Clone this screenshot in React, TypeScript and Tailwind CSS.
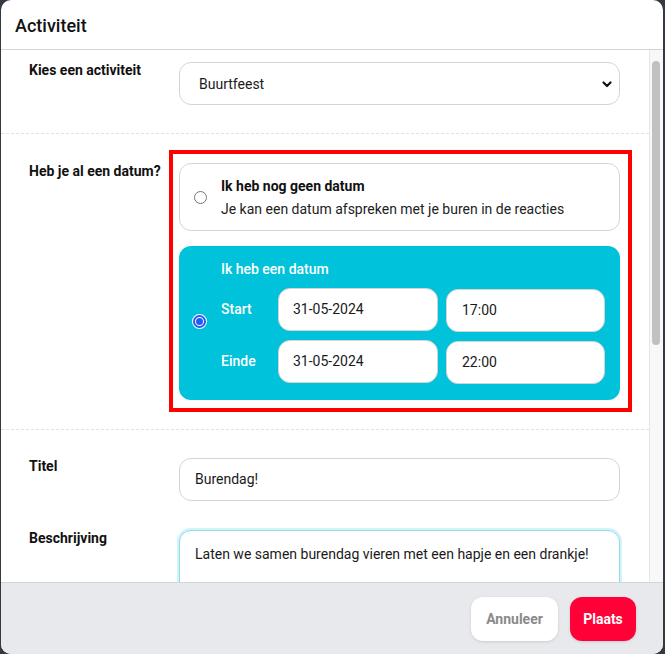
import React from "react";

function Radio({ checked }: { checked?: boolean }) {
  if (checked) {
    return (
      <div className="w-[13px] h-[13px] shrink-0 rounded-full border-[2px] border-[#1f5cf5] bg-white flex items-center justify-center shadow-[0_0_0_1px_#ffffff]">
        <div className="w-[7px] h-[7px] rounded-full bg-[#1f5cf5]" />
      </div>
    );
  }
  return <div className="w-[13px] h-[13px] shrink-0 rounded-full border border-[#767676] bg-white" />;
}

function Field({ value, className = "" }: { value: string; className?: string }) {
  return (
    <div
      className={
        "h-[43px] rounded-[12px] border border-[#d4d4d4] bg-white flex items-center text-[14px] text-[#1a1a1a] " +
        className
      }
    >
      {value}
    </div>
  );
}

export default function App() {
  return (
    <div className="w-[665px] h-[654px] bg-[#353a42] pl-px pr-[2px] font-['Roboto','Liberation_Sans',sans-serif]">
      <div className="h-full bg-white rounded-[10px] overflow-hidden flex flex-col">
        {/* Header */}
        <div className="h-[50px] shrink-0 border-b border-[#d4d4d4] pl-[14px] pt-[1px] flex items-center text-[18px] font-medium text-[#111]">
          Activiteit
        </div>

        {/* Body */}
        <div className="flex flex-1 min-h-0">
          <div className="flex-1 overflow-hidden">
            {/* Section 1 */}
            <div className="grid grid-cols-[150px_441px] pl-[28px] pt-[12px] pb-[28px] border-b border-dashed border-[#e2e2e2]">
              <div className="text-[14px] font-bold leading-4 text-[#111]">Kies een activiteit</div>
              <div className="h-[43px] rounded-[12px] border border-[#d4d4d4] bg-white flex items-center justify-between pl-[19px] pr-[6px] pt-[1px] text-[14px] text-[#1a1a1a]">
                <span>Buurtfeest</span>
                <svg width="12" height="12" viewBox="0 0 12 12" fill="none">
                  <path d="M2.5 4.5 6 8l3.5-3.5" stroke="#111" strokeWidth="2.2" strokeLinecap="round" strokeLinejoin="round" />
                </svg>
              </div>
            </div>

            {/* Section 2 */}
            <div className="grid grid-cols-[150px_441px] pl-[28px] pt-[29px] pb-[29px] border-b border-dashed border-[#e2e2e2]">
              <div className="text-[14px] font-bold leading-4 text-[#111]">Heb je al een datum?</div>
              <div className="relative flex flex-col gap-[15px]">
                <div className="h-[68px] rounded-[12px] border border-[#d4d4d4] bg-white flex items-center pl-[14px]">
                  <Radio />
                  <div className="ml-[14px] flex flex-col">
                    <div className="text-[14px] leading-5 font-bold text-[#111]">Ik heb nog geen datum</div>
                    <div className="mt-[3px] text-[14px] leading-5 text-[#222]">
                      Je kan een datum afspreken met je buren in de reacties
                    </div>
                  </div>
                </div>
                <div className="rounded-[12px] bg-[#00c2da] flex items-center pl-[14px] pr-[15px] pt-[13px] pb-[17px]">
                  <Radio checked />
                  <div className="ml-[15px] flex flex-col flex-1">
                    <div className="text-[14px] leading-5 font-medium text-white">Ik heb een datum</div>
                    <div className="mt-[9px] grid grid-cols-[49px_160px_159px] gap-x-[8px] gap-y-[9px] items-center">
                      <div className="text-[14px] font-medium text-white">Start</div>
                      <Field value="31-05-2024" className="pl-[14px]" />
                      <Field value="17:00" className="pl-[15px] translate-y-[1px]" />
                      <div className="text-[14px] font-medium text-white">Einde</div>
                      <Field value="31-05-2024" className="pl-[14px]" />
                      <Field value="22:00" className="pl-[15px] translate-y-[1px]" />
                    </div>
                  </div>
                </div>
                <div className="pointer-events-none absolute top-[-13px] left-[-10px] right-[-12px] bottom-[-12px] border-4 border-[#ff0000]" />
              </div>
            </div>

            {/* Section 3 */}
            <div className="grid grid-cols-[150px_441px] gap-y-[29px] pl-[28px] pt-[28px] pb-[29px]">
              <div className="text-[14px] font-bold leading-4 text-[#111]">Titel</div>
              <Field value="Burendag!" className="pl-[15px]" />
              <div className="text-[14px] font-bold leading-4 text-[#111]">Beschrijving</div>
              <div className="h-[140px] rounded-[12px] border border-[#8fdde8] shadow-[0_0_0_2px_rgba(0,194,218,0.18)] bg-white pl-[15px] pt-[13px] text-[14px] leading-5 text-[#1a1a1a]">
                Laten we samen burendag vieren met een hapje en een drankje!
              </div>
            </div>
          </div>

          {/* Scrollbar */}
          <div className="w-[14px] shrink-0 bg-[#f8f8f8] border-l border-[#e6e6e6] pt-[11px]">
            <div className="ml-[2px] w-[8px] h-[284px] rounded-full bg-[#c1c1c1]" />
          </div>
        </div>

        {/* Footer */}
        <div className="h-[72px] shrink-0 border-t border-[#d4d4d4] bg-[#e8e9ed] flex justify-end items-start pt-[14px] pr-[27px] gap-[12px]">
          <button className="w-[87px] h-[44px] rounded-[12px] bg-white text-[14px] font-bold text-[#8a8a8a] shadow-[0_1px_3px_rgba(0,0,0,0.12)]">
            Annuleer
          </button>
          <button className="w-[66px] h-[44px] rounded-[12px] bg-[#ff0037] text-[14px] font-bold text-white shadow-[0_1px_3px_rgba(0,0,0,0.12)]">
            Plaats
          </button>
        </div>
      </div>
    </div>
  );
}
